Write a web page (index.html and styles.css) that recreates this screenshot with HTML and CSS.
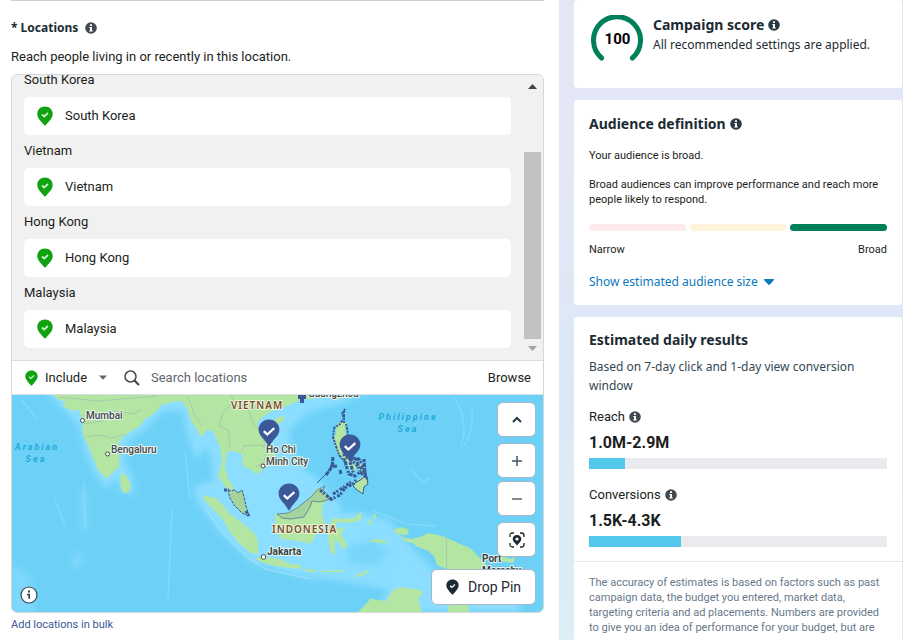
FILE: index.html
```
<!DOCTYPE html>
<html lang="en">
<head>
<meta charset="utf-8">
<title>Locations</title>
<link rel="stylesheet" href="styles.css">
</head>
<body>
<svg class="defs" aria-hidden="true">
  <symbol id="info" viewBox="0 0 12 12"><circle cx="6" cy="6" r="5.8" fill="currentColor"/><path d="M5 2.2h2v1.7H5zM4.3 4.9H7v3.5h.8v1.2H4.2V8.4H5V6.1h-.7z" fill="#fff"/></symbol>
  <symbol id="pin" viewBox="0 0 16 20"><path d="M8 .5C3.6.5.3 3.7.3 7.9c0 4.3 3.9 7.4 6.600 10.900q1.100 1.400 2.200 0c2.700-3.500 6.600-6.600 6.600-10.900C15.700 3.700 12.400.5 8 .5z" fill="currentColor"/><path d="M5 8.500l2.200 2 3.800-3.500" fill="none" stroke="var(--tick, #fff)" stroke-width="1.700"/></symbol>
  <symbol id="map-pin" viewBox="0 0 22 28"><path d="M11 .5C5 .5.6 5 .6 10.600c0 6.900 7 10 9.300 16q1.100 1.600 2.200 0c2.300-6 9.300-9.100 9.300-16C21.400 5 17 .5 11 .5z" fill="#3b5998"/><path d="M5.800 12.200l3.500 3.300 7-6.300" fill="none" stroke="#fff" stroke-width="2.300"/></symbol>
</svg>
<div class="layout">
  <main class="main">
    <h2 class="field-title">* Locations <svg class="info"><use href="#info"/></svg></h2>
    <p class="field-help">Reach people living in or recently in this location.</p>
    <section class="picker">
      <div class="list">
        <div class="list-body">
          <h3 class="group">South Korea</h3>
          <div class="place"><svg class="place-pin"><use href="#pin"/></svg>South Korea</div>
          <h3 class="group">Vietnam</h3>
          <div class="place"><svg class="place-pin"><use href="#pin"/></svg>Vietnam</div>
          <h3 class="group">Hong Kong</h3>
          <div class="place"><svg class="place-pin"><use href="#pin"/></svg>Hong Kong</div>
          <h3 class="group">Malaysia</h3>
          <div class="place"><svg class="place-pin"><use href="#pin"/></svg>Malaysia</div>
        </div>
        <div class="scrollbar">
          <span class="arrow arrow-up"></span>
          <span class="thumb"></span>
          <span class="arrow arrow-down"></span>
        </div>
      </div>
      <div class="toolbar">
        <label class="mode">
          <svg class="mode-pin"><use href="#pin"/></svg>
          <select class="mode-select" aria-label="Include or exclude"><option>Include</option></select>
          <svg class="mode-caret" viewBox="0 0 8 5"><path d="M0 .5h8L4 4.800z" fill="#606770"/></svg>
        </label>
        <svg class="search-icon" viewBox="0 0 16 16"><circle cx="6.500" cy="6.500" r="5.500" fill="none" stroke="#444950" stroke-width="1.500"/><path d="M10.500 10.500l4.500 4.500" stroke="#444950" stroke-width="2.200"/></svg>
        <input class="search" type="text" placeholder="Search locations" aria-label="Search locations">
        <button class="browse" type="button">Browse</button>
      </div>
      <div class="map">
        <svg class="map-art" viewBox="12 395 531 217" preserveAspectRatio="xMidYMid slice">
          <defs><filter id="soft" x="-20%" y="-20%" width="140%" height="140%"><feGaussianBlur stdDeviation="3"/></filter></defs>
          <rect x="12" y="395" width="532" height="217" fill="#6dd1f7"/>
          <g fill="#8bdeff" filter="url(#soft)">
            <path d="M44 390L66 412 78 425 86 455 96 475 106 488 118 478 120 492 134 494 132 474 124 462 128 442 146 428 162 412 182 410 186 430 196 460 208 446 214 480 194 486 196 500 222 535 252 562 300 576 360 584 390 590 372 612 520 612 516 590 480 584 446 582 420 556 390 522 350 506 335 500 318 480 296 455 288 430 310 412 345 402 370 390z"/>
            <path d="M12 565L30 575 35 612 12 612zM80 490h6l2 40-5 1zM72 560l8-12 3 14-10 10z" opacity=".6"/>
          </g>
          <g fill="#6dd1f7" filter="url(#soft)">
            <path d="M298 430L324 436 328 462 308 474 292 446zM340 500L374 498 380 512 340 512z"/>
            <path d="M345 548L372 540 390 552 378 566 350 564z" opacity=".6"/>
          </g>
          <g fill="none" stroke="#a0e3fb" stroke-width="1.500" opacity=".4">
            <path d="M22 400l14 18M55 500l12 30M84 482l1 44M172 510l-4 90M185 450l5 50M455 398q14 26 6 48M472 408q2 22-8 38M412 470l10 12 8-4M372 510l34 14 30 2"/>
            <path d="M205 508l18 25 24 24 18 12 45 10" stroke="#bdebfc"/>
          </g>
          <g fill="#b3e6a2">
            <path d="M53 394L57 399 66 402 62 406 72 411 78 409 82 418 83 435 90 450 98 470 107 479 112 473 119 467 120 449 119 441 125 435 140 426 144 420 157 411 161 405 173 402 182 401 188 410 191 421 197 430 201 437 207 430 213 431 220 447 222 461 218 476 227 489 235 490 232 484 228 479 225 467 227 452 233 451 242 454 243 466 253 471 256 475 263 469 274 463 275 453 270 446 260 434 257 424 260 419 270 412 287 406 300 400 330 397 337 394z"/>
            <path d="M121 473l5 2 5 10-2 7-6 1-3-9zM275 419l6-3 4 1-4 6-6 1zM334 394h7l-2 7z"/>
            <path d="M202 495L216 498 224 506 230 514 240 521 248 528 254 533 258 540 258 554 250 553 239 543 231 534 224 521 215 511 205 501z"/>
            <path d="M255 558L263 557 280 559 290 564 300 565 302 569 290 568 275 566 260 562z"/>
            <path d="M275 514L286 513 293 510 307 501 318 487 330 498 323 504 322 514 325 524 317 533 311 544 299 541 281 539 276 528z"/>
            <path d="M329 526L333 518 342 519 355 518 361 511 361 520 350 523 336 522 337 529 346 527 341 533 347 545 344 550 338 541 335 541 335 554 331 553 328 540zM372 517l4-4-1 6zM367 523l5-4-1 6zM367 541l11-2 12 3-9 1zM305 569l12 1-3 2-9-1zM320 571l24-1-2 2h-20zM354 578l6-5 11-4-7 6z"/>
            <path d="M393 530L402 527 409 530 407 535 399 534 403 538 412 539 420 537 428 533 438 535 447 538 460 544 470 548 480 558 489 568 505 580 492 578 478 571 465 574 447 569 437 565 434 556 428 551 416 546 413 543 404 541 400 536z"/>
            <path d="M498 556l14 3 4-4-3 8-12-2zM540 562l5 4z"/>
            <path d="M358 612L366 604 371 598 377 600 386 601 392 591 400 587 420 590 423 592 418 600 422 612zM448 612l2-17 6-7 4 10 8 7 1 7z"/>
            <path d="M337 424l5-3 4 2-1 9 3 7-6 8 2 8 7 5-2 3-8-5-5-8-2-11 2-7zM347 463l6-2 3 8-3 5zM356 460l6 5 1 9-4-4zM355 482l7-5 4-4 2 11-4 3-1 7-6-4-3-4z"/>
          </g>
          <g fill="none" stroke="#a4b8ae" stroke-width=".8" opacity=".8">
            <path d="M84 424l18-3 13-10 18 3 9-5M85 437l14-2 12 3 12-3M58 397l40 4 60-5M188 396l6 18 8 12M232 404l-9 8-4 14 9 4 2 18M230 395l8 12 10 2 6 16 8 8 3 13M241 452l3-6 18-1 5 5-3 12-8 5"/>
            <path d="M446.500 538v31"/>
          </g>
          <g fill="#a5d39d" stroke="#3b5998" stroke-width="1">
            <path d="M228 491l7-1 3 3 4-3 2 7 2 9 3 10-7-3-8-8-4-7z" stroke-dasharray="3 1"/>
            <path d="M277 514l5 4 8 1 14-2 6-10 2-6 8 1 11-3-5-6-3-3 2-4-8 4-6 7-14 11-9 5z" stroke-opacity=".6"/>
          </g>
          <g fill="none" stroke="#3b5998">
            <path d="M345 409l-3 5 2 4-4 6-6 4-1 9 3 9 3 9 6 7M346 424l2 9-3 12 7 14M344 411v12" stroke-width="2" stroke-dasharray="2 1 3 1 2 1"/>
            <path d="M343 449l10 9 6 1 5 8 2 10-6-5-5 4-6-2-3-9zM350 462l4 13M356 458l4 13M346 456l12 10M360 467l6 6M364 459l1 12" stroke-width="3" stroke-dasharray="3 1 4 1 2 2"/>
            <path d="M355 483l7-4 4-5 2 10-4 3-1 7-6-4-4-4zM334 463l-5 8-12 12" stroke-width="1"/>
            <path d="M333 457l-1 10-6 8M337 466l-7 1M340 470l1 4" stroke-width="3" stroke-dasharray="4 1 5 1"/>
            <path d="M330 500l10-5 5-7 8-4 3-4M333 494l8-5 10-7M320 490l12 10" stroke-width="3" stroke-dasharray="3 1 2 2"/>
            <path d="M224 490h5M246 511l3 5" stroke-width="3" stroke-dasharray="3 1"/>
            <path d="M298 397h8M302 395v8" stroke-width="4"/>
          </g>
          <g class="dots"><circle cx="82.500" cy="420.500" r="2"/><circle cx="107.500" cy="454" r="2"/><circle cx="263" cy="466" r="2"/><circle cx="263.500" cy="557" r="2.300"/></g>
          <g class="city">
            <text x="86" y="419">Mumbai</text><text x="111" y="453">Bengaluru</text>
            <text x="266" y="453">Ho Chi</text><text x="266" y="465">Minh City</text>
            <text x="308" y="397">Guangzhou</text>
          </g>
          <g class="city city-strong"><text x="267" y="555">Jakarta</text><text x="482" y="562">Port</text><text x="482" y="574">Moresby</text></g>
          <g class="country"><text x="231" y="409">VIETNAM</text><text x="272" y="533">INDONESIA</text></g>
          <g class="sea"><text x="37" y="450">Arabian</text><text x="36" y="462">Sea</text><text x="408" y="420">Philippine</text><text x="408" y="432">Sea</text></g>
          <use href="#map-pin" x="258" y="419" width="22" height="28"/>
          <use href="#map-pin" x="339" y="434" width="22" height="28"/>
          <use href="#map-pin" x="278" y="483" width="22" height="28"/>
        </svg>
        <button class="map-info" type="button" aria-label="Map information"><svg viewBox="0 0 18 18"><circle cx="9" cy="9" r="8" fill="#fff" stroke="#344854" stroke-width="1.200"/><path d="M8 4.500h2v2H8zM7 7.800h3v5H8.300V9.200H7z" fill="#344854"/></svg></button>
        <div class="controls">
          <button class="ctl" type="button" aria-label="Collapse map"><svg viewBox="0 0 16 16"><path d="M4 10l4-4 4 4" fill="none" stroke="#283943" stroke-width="2"/></svg></button>
          <div class="zoom">
            <button class="ctl" type="button" aria-label="Zoom in"><svg viewBox="0 0 16 16"><path d="M3 8h10M8 3v10" stroke="#465560" stroke-width="1.500"/></svg></button>
            <button class="ctl" type="button" aria-label="Zoom out"><svg viewBox="0 0 16 16"><path d="M3 8h10" stroke="#56636c" stroke-width="1.500"/></svg></button>
          </div>
          <button class="ctl" type="button" aria-label="My location"><svg viewBox="0 0 16 16"><path d="M1 5V3.500Q1 1 3.500 1H5M11 1h1.500Q15 1 15 3.500V5M15 11v1.500q0 2.500-2.500 2.500H11M5 15H3.500Q1 15 1 12.500V11" fill="none" stroke="#1c2b33" stroke-width="1.300"/><path d="M8 3C5.300 3 3.700 4.900 3.700 7c0 2.500 2.500 4 4.300 6.500C9.800 11 12.300 9.500 12.300 7 12.300 4.900 10.700 3 8 3z" fill="#1c2b33"/><circle cx="8" cy="7" r="1.600" fill="#fff"/></svg></button>
          <button class="drop" type="button"><svg class="drop-pin"><use href="#pin"/></svg>Drop Pin</button>
        </div>
      </div>
    </section>
    <a class="bulk" href="#">Add locations in bulk</a>
  </main>
  <aside class="side">
    <section class="card score">
      <div class="gauge">
        <svg viewBox="0 0 52 46"><path d="M10.600 43A23.500 23.500 0 1 1 41.400 43" fill="none" stroke="#00805a" stroke-width="5" stroke-linecap="round"/></svg>
        <span class="gauge-value">100</span>
      </div>
      <div>
        <h2 class="card-title">Campaign score <svg class="info"><use href="#info"/></svg></h2>
        <p class="score-text">All recommended settings are applied.</p>
      </div>
    </section>
    <section class="card audience">
      <h2 class="card-title">Audience definition <svg class="info"><use href="#info"/></svg></h2>
      <p class="small">Your audience is broad.</p>
      <p class="small">Broad audiences can improve performance and reach more people likely to respond.</p>
      <div class="range"><span class="narrow"></span><span class="mid"></span><span class="broad"></span></div>
      <div class="range-labels"><span>Narrow</span><span>Broad</span></div>
      <a class="estimate" href="#">Show estimated audience size <svg viewBox="0 0 10 6"><path d="M.5 0h9q.8.500.2 1.200L5.800 5.500q-.8.600-1.600 0L.3 1.200Q-.2.500.5 0z" fill="#0a78be"/></svg></a>
    </section>
    <section class="card results">
      <div class="results-body">
        <h2 class="card-title">Estimated daily results</h2>
        <p class="basis">Based on 7-day click and 1-day view conversion window</p>
        <div class="metric">
          <p class="metric-name">Reach <svg class="info"><use href="#info"/></svg></p>
          <p class="metric-value">1.0M-2.9M</p>
          <div class="bar"><span class="bar-fill" style="width:12%"></span></div>
        </div>
        <div class="metric">
          <p class="metric-name">Conversions <svg class="info"><use href="#info"/></svg></p>
          <p class="metric-value">1.5K-4.3K</p>
          <div class="bar"><span class="bar-fill" style="width:31%"></span></div>
        </div>
      </div>
      <p class="note">The accuracy of estimates is based on factors such as past campaign data, the budget you entered, market data, targeting criteria and ad placements. Numbers are provided to give you an idea of performance for your budget, but are</p>
    </section>
  </aside>
</div>
</body>
</html>
```
FILE: styles.css
```
* { box-sizing: border-box; margin: 0; padding: 0; }
body {
  font-family: Roboto, "Liberation Sans", sans-serif;
  font-size: 13px;
  line-height: 16px;
  color: #1c1e21;
  background: #fff;
}
button, input, select { font: inherit; color: inherit; border: 0; background: none; }
svg { display: block; }
a { text-decoration: none; }
.defs { position: absolute; width: 0; height: 0; }

.layout {
  display: grid;
  grid-template-columns: minmax(0, 1fr) 344px;
  height: 100vh;
  overflow: hidden;
}

.main { margin: 0 15px 0 11px; border-top: 1px solid #ccd0d5; }
.field-title {
  display: flex;
  align-items: center;
  gap: 7px;
  margin-top: 17px;
  font-family: "Noto Sans", sans-serif;
  font-size: 12px;
  line-height: 20px;
  font-weight: 700;
  color: #1c2b33;
}
.info { flex: none; width: 12px; height: 12px; color: #444950; }
.field-help { margin: 11px 0 9px; }

.picker {
  border: 1px solid #d5d7db;
  border-radius: 6px;
  overflow: hidden;
}
.list { display: flex; height: 286px; background: #f1f1f1; border-bottom: 1px solid #dadde1; }
.list-body {
  flex: 1;
  display: flex;
  flex-direction: column;
  justify-content: flex-end;
  overflow: hidden;
  padding: 0 13px 12px 12px;
}
.group { flex: none; padding-bottom: 1px; font-size: 13px; font-weight: 400; line-height: 32px; }
.place {
  flex: none;
  display: flex;
  align-items: center;
  gap: 12px;
  height: 38px;
  padding: 0 13px;
  border-radius: 5px;
  background: #fff;
}
.place-pin { width: 16px; height: 20px; color: #11a211; --tick: #c9efc9; }
.scrollbar {
  display: flex;
  flex-direction: column;
  align-items: center;
  width: 17px;
  margin-right: 2px;
}
.arrow { width: 9px; height: 5px; background: #444; }
.arrow-up { margin: 9px 0 63px; clip-path: polygon(50% 0, 100% 100%, 0 100%); }
.arrow-down { margin: 7px 0 9px; background: #a3a3a3; clip-path: polygon(0 0, 100% 0, 50% 100%); }
.thumb { flex: 1; width: 100%; background: #c1c1c1; }

.toolbar { display: flex; align-items: center; height: 34px; padding: 0 12px 0 13px; border-bottom: 1px solid #dadde1; }
.mode { display: flex; align-items: center; gap: 7px; }
.mode-pin { width: 13px; height: 16px; color: #11a211; --tick: #c9efc9; }
.mode-select { appearance: none; width: 47px; }
.mode-caret { width: 8px; height: 5px; }
.search-icon { width: 16px; height: 16px; margin: 0 11px 0 17px; }
.search { flex: 1; min-width: 0; height: 24px; outline: 0; }
.search::placeholder { color: #606770; opacity: 1; }

.map { position: relative; height: 217px; }
.map-art { width: 100%; height: 100%; }
.map-art text { font-family: Roboto, sans-serif; paint-order: stroke; stroke-linejoin: round; }
.dots circle { fill: #fff; stroke: #444950; stroke-width: 1px; }
.city text { font-size: 10px; font-weight: 500; fill: #43474f; stroke: #e8f6ea; stroke-width: 2px; }
.city-strong text { font-weight: 700; fill: #35424a; }
.country text { font-family: "Noto Sans", sans-serif; font-size: 10px; font-weight: 600; letter-spacing: 1px; fill: #7d4a2c; stroke: #eaf7dd; stroke-width: 2px; }
.sea text { font-size: 9px; font-weight: 700; font-style: italic; letter-spacing: 2px; text-anchor: middle; fill: #23aad8; }
.map-info { position: absolute; left: 8px; bottom: 8px; width: 18px; height: 18px; }
.controls {
  position: absolute;
  top: 7px;
  right: 7px;
  display: flex;
  flex-direction: column;
  align-items: flex-end;
  gap: 6px;
}
.zoom { display: flex; flex-direction: column; gap: 3px; }
.ctl, .drop {
  display: flex;
  align-items: center;
  justify-content: center;
  width: 39px;
  height: 35px;
  border: 1px solid #a9b6c6;
  border-radius: 6px;
  background: #fff;
}
.ctl svg { width: 16px; height: 16px; }
.drop { gap: 9px; width: 105px; height: 36px; margin-top: 6px; font-size: 14px; color: #1c2b33; }
.drop-pin { width: 13px; height: 16px; color: #1c2b33; }
.bulk { display: inline-block; margin-top: 4px; font-size: 11px; color: #385898; }

.side {
  display: flex;
  flex-direction: column;
  gap: 12px;
  padding: 0 1px 0 15px;
  background: linear-gradient(180deg, #e4e6f5 0%, #e2e7f6 35%, #dbe9f6 60%, #ddeef5 100%);
}
.card { flex: none; border-radius: 3px; background: #fff; color: #1c2b33; }
.card-title {
  display: flex;
  align-items: center;
  gap: 4px;
  font-family: "Noto Sans", sans-serif;
  font-size: 14px;
  line-height: 20px;
  font-weight: 700;
}
.card-title .info { color: #283943; }
.score { display: flex; gap: 9px; height: 88px; padding: 15px 10px 15px 17px; }
.gauge { position: relative; flex: none; width: 53px; height: 46px; }
.gauge svg { width: 52px; height: 46px; }
.gauge-value {
  position: absolute;
  inset: 14px 0 auto 0;
  line-height: 20px;
  font-size: 15px;
  font-weight: 700;
  text-align: center;
  color: #000;
}
.score-text, .basis, .estimate { font-family: "Noto Sans", sans-serif; font-size: 12px; line-height: 19px; }
.audience { padding: 14px 15px; }
.small { margin-top: 14px; font-size: 11px; line-height: 15px; color: #1c1e21; }
.range { display: flex; gap: 4px; margin-top: 17px; }
.range span { flex: 1; height: 7px; border-radius: 4px; }
.narrow { background: #ffebec; }
.mid { background: #fff3d9; }
.broad { background: #00805a; }
.range-labels { display: flex; justify-content: space-between; margin-top: 11px; font-size: 11px; color: #1c1e21; }
.estimate { display: flex; align-items: center; gap: 6px; margin-top: 14px; color: #0a78be; }
.estimate svg { width: 10px; height: 6px; }
.results { flex: 1 0 auto; }
.results-body { padding: 13px 15px 14px; border-bottom: 1px solid #e4e6eb; }
.basis { margin-top: 7px; color: #344854; }
.metric { margin-top: 14px; color: #1c1e21; }
.metric + .metric { margin-top: 18px; }
.metric-name { display: flex; align-items: center; gap: 4px; }
.metric-value { margin: 7px 0 4px; font-size: 16px; line-height: 22px; font-weight: 700; }
.bar { height: 11px; background: #e9ebee; }
.bar-fill { display: block; height: 100%; background: #54c7ec; }
.note { padding: 13px 12px 13px 15px; font-size: 11px; line-height: 15px; color: #67788a; }
```
